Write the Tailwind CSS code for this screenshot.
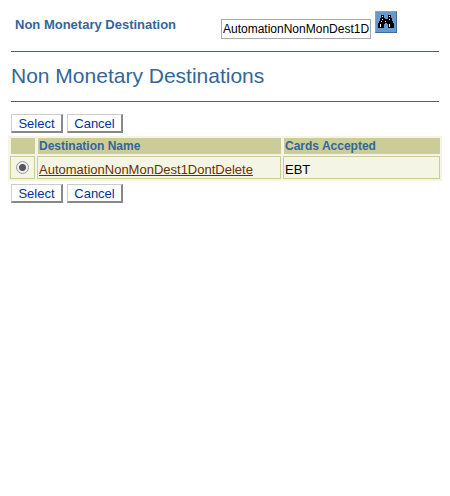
<!DOCTYPE html>
<html lang="en">
<head>
<meta charset="utf-8">
<title>Non Monetary Destinations</title>
<script src="https://cdn.jsdelivr.net/npm/@tailwindcss/browser@4"></script>
</head>
<body class="bg-white font-['Liberation_Sans',Arial,sans-serif] text-[13px] text-black">
<form class="px-2 pt-[11px]">
  <div class="mx-[3px] flex items-start border-b border-[#336699] pb-[12px]">
    <label for="dest" class="w-[210px] pl-1 pt-[6px] text-[13px] leading-4 font-bold text-[#336699]">Non Monetary Destination</label>
    <input id="dest" type="text" value="AutomationNonMonDest1DontDelete" class="mt-2 h-5 w-[150px] border border-[#a9a9a9] px-px text-[12px]">
    <button type="button" aria-label="Search" class="ml-1 size-[22px] border border-t-[#6fa8e0] border-l-[#6fa8e0] border-r-[#3f6c9c] border-b-[#3f6c9c] bg-[#6699cc]">
      <svg viewBox="0 0 20 20" class="size-5" shape-rendering="crispEdges">
        <path fill="#000" d="M5 3h3v3h1v1h3V3h3v3h1v3h1v2h1v5h-6v-4h-1v-1H9v1H8v4H2v-5h1V9h1V6h1z"/>
        <path fill="#fff" d="M6 4h1v1H6zM13 4h1v1h-1zM6 7h1v1H6zM13 7h1v1h-1zM5 9h1v1H5zM4 12h1v3H4zM13 12h1v3h-1zM9 9h1v1H9z"/>
      </svg>
    </button>
  </div>
  <h1 class="mx-[3px] border-b border-[#336699] pt-[10px] pb-[11px] text-[21px] leading-7 text-[#336699]">Non Monetary Destinations</h1>
  <div class="mx-[3px] mt-3 mb-[3px] flex gap-1">
    <button type="button" class="h-[19px] w-[52px] border border-t-[#cccccc] border-l-[#cccccc] border-r-2 border-b-2 border-r-[#888888] border-b-[#888888] pt-px text-[13px] leading-4 text-[#003399]">Select</button>
    <button type="button" class="h-[19px] w-[56px] border border-t-[#cccccc] border-l-[#cccccc] border-r-2 border-b-2 border-r-[#888888] border-b-[#888888] pt-px text-[13px] leading-4 text-[#003399]">Cancel</button>
  </div>
  <table class="w-full table-fixed border-separate border-spacing-[2px] bg-[#f5f5e6]">
    <colgroup><col class="w-[25px]"><col class="w-[244px]"><col></colgroup>
    <thead>
      <tr class="text-left text-[12px] leading-4 text-[#336699]">
        <th class="border-l border-[#f5f5e6] bg-[#cccc99] bg-clip-padding p-0"></th>
        <th class="border-l border-[#f5f5e6] bg-[#cccc99] bg-clip-padding p-0 pl-px">Destination Name</th>
        <th class="border-l border-[#f5f5e6] bg-[#cccc99] bg-clip-padding p-0 pl-px">Cards Accepted</th>
      </tr>
    </thead>
    <tbody>
      <tr class="h-[23px] leading-4">
        <td class="border border-[#cccc99] p-0"><input type="radio" name="row" checked aria-label="AutomationNonMonDest1DontDelete" class="mx-auto block size-[13px] appearance-none rounded-full border border-[#999999] bg-[radial-gradient(circle,#555555_3px,#eeeeee_4px)]"></td>
        <td class="border border-[#cccc99] p-0 pt-1 pl-px"><a href="#" class="text-[#663300] underline">AutomationNonMonDest1DontDelete</a></td>
        <td class="border border-[#cccc99] p-0 pt-1 pl-px">EBT</td>
      </tr>
    </tbody>
  </table>
  <div class="mx-[3px] mt-[3px] flex gap-1">
    <button type="button" class="h-[19px] w-[52px] border border-t-[#cccccc] border-l-[#cccccc] border-r-2 border-b-2 border-r-[#888888] border-b-[#888888] pt-px text-[13px] leading-4 text-[#003399]">Select</button>
    <button type="button" class="h-[19px] w-[56px] border border-t-[#cccccc] border-l-[#cccccc] border-r-2 border-b-2 border-r-[#888888] border-b-[#888888] pt-px text-[13px] leading-4 text-[#003399]">Cancel</button>
  </div>
</form>
</body>
</html>
